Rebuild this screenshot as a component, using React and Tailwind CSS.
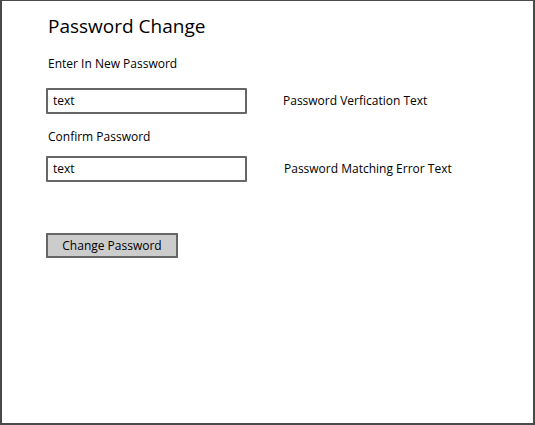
export default function App() {
  const font = { fontFamily: '"Comic Sans MS", "Open Sans", sans-serif' };
  return (
    <div style={font} className="w-[535px] h-[425px] bg-white border-l-2 border-t border-r-2 border-b-2 border-[#4a4a4a] text-black">
      <div className="pl-[44px] pt-[11px]">
        <h1 className="pl-[2px] text-[19px] leading-[28px]">Password Change</h1>

        <p className="pl-[2px] mt-[16px] text-[12px] leading-[16px]">Enter In New Password</p>
        <div className="flex items-center mt-[16px]">
          <div className="w-[201px] h-[26px] border-2 border-[#666] rounded-[1px] flex items-center pl-[5px] text-[12px]">text</div>
          <span className="ml-[36px] text-[12px]">Password Verfication Text</span>
        </div>

        <p className="pl-[2px] mt-[15px] text-[12px] leading-[16px]">Confirm Password</p>
        <div className="flex items-center mt-[11px]">
          <div className="w-[201px] h-[26px] border-2 border-[#666] rounded-[1px] flex items-center pl-[5px] text-[12px]">text</div>
          <span className="ml-[37px] text-[12px]">Password Matching Error Text</span>
        </div>

        <button className="mt-[51px] w-[132px] h-[25px] bg-[#cccccc] border-2 border-[#666] text-[12px] flex items-center justify-center">
          Change Password
        </button>
      </div>
    </div>
  );
}
